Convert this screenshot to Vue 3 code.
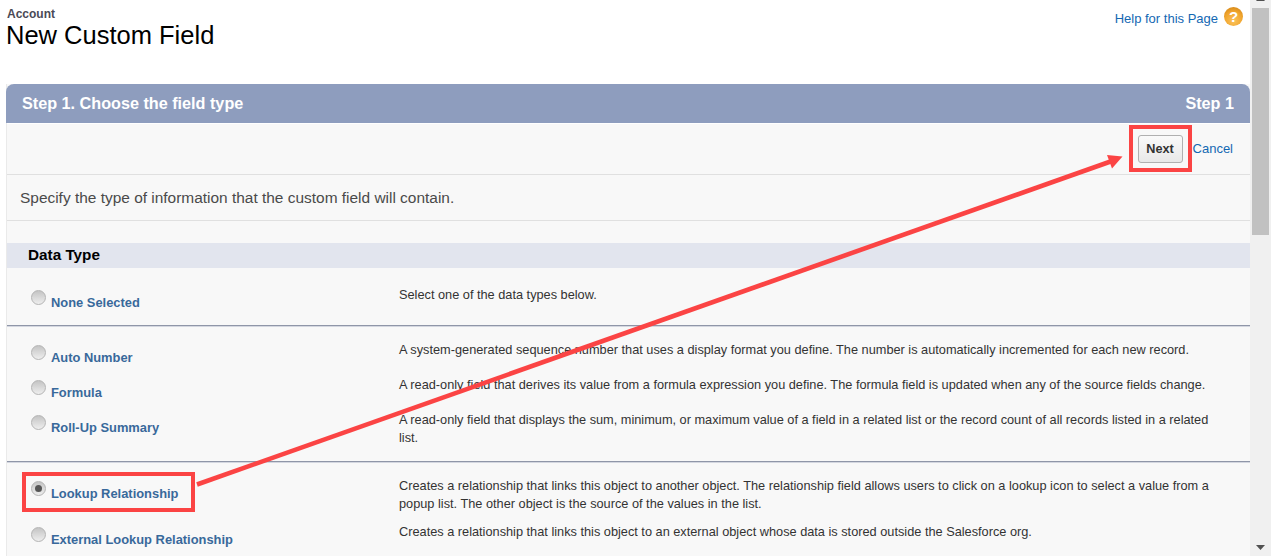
<script setup>
const groups = [
  { rows: [{ label: 'None Selected', desc: 'Select one of the data types below.', h: 54 }] },
  { rows: [
    { label: 'Auto Number', desc: 'A system-generated sequence number that uses a display format you define. The number is automatically incremented for each new record.', h: 35 },
    { label: 'Formula', desc: 'A read-only field that derives its value from a formula expression you define. The formula field is updated when any of the source fields change.', h: 35 },
    { label: 'Roll-Up Summary', desc: 'A read-only field that displays the sum, minimum, or maximum value of a field in a related list or the record count of all records listed in a related list.', h: 65 },
  ] },
  { rows: [
    { label: 'Lookup Relationship', desc: 'Creates a relationship that links this object to another object. The relationship field allows users to click on a lookup icon to select a value from a popup list. The other object is the source of the values in the list.', h: 46, checked: true },
    { label: 'External Lookup Relationship', desc: 'Creates a relationship that links this object to an external object whose data is stored outside the Salesforce org.', h: 40 },
  ] },
]
</script>

<template>
  <div class="page">
    <main class="main">
      <header class="head">
        <div class="titles">
          <div class="crumb">Account</div>
          <h1>New Custom Field</h1>
        </div>
        <div class="help">
          <a>Help for this Page</a>
          <span class="qicon">?</span>
        </div>
      </header>
      <section class="panel">
        <div class="bar"><span>Step 1. Choose the field type</span><span>Step 1</span></div>
        <div class="actions">
          <button class="next">Next</button>
          <a class="cancel">Cancel</a>
        </div>
        <div class="intro">Specify the type of information that the custom field will contain.</div>
        <div class="typehead">Data Type</div>
        <div v-for="(g, i) in groups" :key="i" class="group">
          <div v-for="r in g.rows" :key="r.label" class="row" :style="{ height: r.h + 'px' }">
            <div class="lab">
              <span class="radio" :class="{ on: r.checked }"></span>
              <span class="name">{{ r.label }}</span>
            </div>
            <div class="desc">{{ r.desc }}</div>
          </div>
        </div>
      </section>
    </main>
    <aside class="scroll">
      <svg class="sarrow up" width="9" height="5" viewBox="0 0 9 5"><path d="M0 0h9L4.5 5z" fill="#505050"/></svg>
      <div class="thumb"></div>
      <svg class="sarrow" width="9" height="5" viewBox="0 0 9 5"><path d="M0 0h9L4.5 5z" fill="#505050"/></svg>
    </aside>
    <div class="mark mark-next"></div>
    <div class="mark mark-look"></div>
    <svg class="arrow" width="1275" height="556" viewBox="0 0 1275 556">
      <path d="M197 484.500 1112 161" stroke="#fb4444" stroke-width="4.6" fill="none"/>
      <path d="M1122.500 156.500 1107 155 1112 168.500z" fill="#fb4444"/>
    </svg>
  </div>
</template>

<style>
html, body { margin: 0; background: #fff; overflow: hidden; }
</style>

<style scoped>
.page { position: relative; display: flex; width: 1275px; height: 556px; overflow: hidden; font-family: "Liberation Sans", Arial, sans-serif; color: #333; }
.main { width: 1250px; padding-left: 6px; box-sizing: border-box; display: flex; flex-direction: column; }
.head { display: flex; justify-content: space-between; height: 84px; }
.crumb { font-size: 12px; font-weight: bold; color: #4a4a56; line-height: 14px; margin-top: 7px; margin-left: 1px; }
h1 { margin: 0; font-size: 25.5px; font-weight: normal; color: #000; line-height: 28px; }
.help { display: flex; align-items: flex-start; gap: 6px; padding-right: 7px; margin-top: 7px; font-size: 13px; color: #1468b3; }
.help a { margin-top: 4px; }
.qicon { width: 19px; height: 19px; border-radius: 50%; background: radial-gradient(circle at 50% 72%, #fbc35c, #f0a42c 55%, #c97c10 100%); color: #fff; font-weight: bold; font-size: 15px; line-height: 19px; text-align: center; }
.panel { flex: 1; background: #f8f8f8; border-left: 1px solid #eaeaea; }
.bar { height: 39px; margin-left: -1px; background: #8e9dbe; border-radius: 8px 8px 0 0; color: #fff; font-weight: bold; font-size: 16.2px; display: flex; align-items: center; justify-content: space-between; padding: 0 16px; box-sizing: border-box; }
.actions { height: 52px; box-sizing: border-box; border-top: 1px solid #fff; border-bottom: 1px solid #e0e0e0; display: flex; justify-content: flex-end; align-items: center; gap: 10px; padding-right: 17px; }
.next { width: 45px; height: 28px; padding: 0; border: 1px solid #b0b0b0; border-radius: 3px; background: linear-gradient(#fafafa, #e8e8e8); font: bold 12.7px "Liberation Sans", Arial, sans-serif; color: #333; }
.cancel { font-size: 13px; color: #1468b3; margin-top: -2px; }
.intro { height: 46px; line-height: 46px; box-sizing: border-box; padding-left: 13px; border-bottom: 1px solid #e0e0e0; font-size: 15.45px; color: #4a4a4a; }
.typehead { margin: 22px 0 3px; height: 25px; line-height: 24px; background: #e2e5ee; padding-left: 21px; font-size: 15.3px; font-weight: bold; color: #000; }
.group { border-bottom: 1px solid #8f96a8; box-shadow: 0 1px 0 #d4d7e0; }
.group:last-child { border-bottom: 0; box-shadow: none; }
.row { display: flex; box-sizing: border-box; padding-top: 19px; }
.lab { width: 392px; padding-left: 24px; box-sizing: border-box; display: flex; align-items: flex-start; gap: 5px; }
.radio { width: 15px; height: 15px; flex: none; box-sizing: border-box; border-radius: 50%; border: 1px solid #b4b4b4; background: linear-gradient(#c4c4c4, #eee); display: flex; align-items: center; justify-content: center; }
.radio.on::after { content: ""; width: 7px; height: 7px; border-radius: 50%; background: #555; }
.name { margin-top: 5px; font-size: 12.9px; line-height: 15px; font-weight: bold; color: #38699b; white-space: nowrap; }
.desc { flex: 1; margin-top: -4px; font-size: 12.75px; line-height: 18px; color: #333; padding-right: 30px; }
.scroll { width: 21px; background: #f0f0f0; display: flex; flex-direction: column; align-items: center; box-sizing: border-box; }
.up { transform: rotate(180deg); margin-top: -4px; }
.thumb { width: 17px; height: 227px; background: #c1c1c1; margin-top: 7px; margin-bottom: auto; }
.sarrow:last-child { margin-bottom: 6px; }
.mark { position: absolute; border: 4px solid #fb4444; box-sizing: border-box; }
.mark-next { left: 1129px; top: 125px; width: 63px; height: 47px; }
.mark-look { left: 22px; top: 472px; width: 173px; height: 40px; }
.arrow { position: absolute; left: 0; top: 0; pointer-events: none; }
</style>
